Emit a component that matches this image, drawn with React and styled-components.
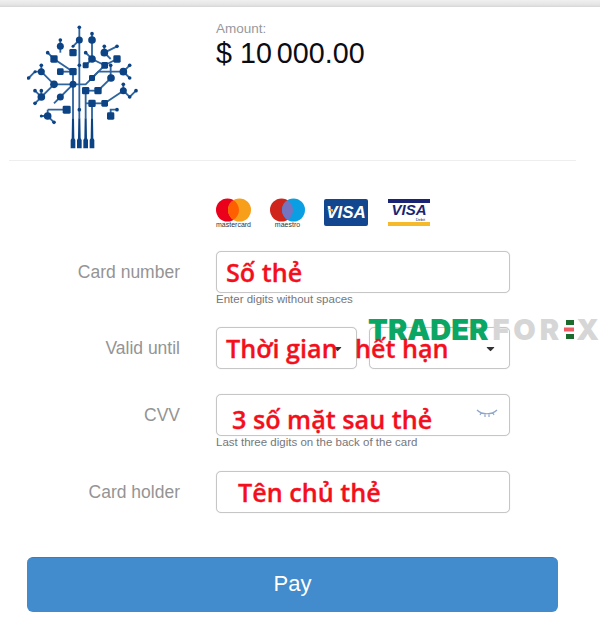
import styled, { createGlobalStyle } from "styled-components";
import { FaCaretDown } from "react-icons/fa";

const GlobalStyle = createGlobalStyle`
  html, body {
    margin: 0;
    padding: 0;
    background: #fff;
    font-family: "Liberation Sans", Arial, sans-serif;
  }
`;

const Page = styled.div`
  position: relative;
  width: 600px;
  height: 623px;
  overflow: hidden;
`;

const TopBar = styled.div`
  height: 7px;
  background: linear-gradient(#f0f0f0, #e4e4e4 70%, #d6d6d6);
`;

const Header = styled.header`
  display: flex;
  height: 153px;
  margin: 0 24px 0 9px;
  border-bottom: 1px solid #eeeeee;
  box-sizing: content-box;
`;

const LogoBox = styled.div`
  width: 207px;
  padding: 18px 0 0 18px;
  box-sizing: border-box;
`;

const AmountBox = styled.div`
  padding-top: 14px;
`;

const AmountLabel = styled.div`
  font-size: 13.5px;
  line-height: 16px;
  color: #98989c;
`;

const AmountValue = styled.div`
  font-size: 28.7px;
  line-height: 32px;
  color: #0c0c14;
`;

const ThousandsGroup = styled.span`
  margin-left: 5px;
`;

const Brands = styled.div`
  display: flex;
  align-items: flex-start;
  gap: 19px;
  height: 30px;
  margin: 37px 0 23px 216px;
`;

const BrandMark = styled.div`
  display: flex;
  flex-direction: column;
  align-items: center;
  width: 35px;
`;

const BrandCaption = styled.span`
  font-size: 7px;
  line-height: 6px;
  white-space: nowrap;
  color: #333;
`;

const VisaBlue = styled.div`
  position: relative;
  display: flex;
  align-items: center;
  justify-content: center;
  width: 44px;
  height: 27px;
  margin-top: 1px;
  border-radius: 2px;
  background: #12468f;
  color: #fff;
  font-size: 17px;
  font-weight: 700;
  font-style: italic;

  &::before {
    content: "";
    position: absolute;
    left: 3px;
    top: 10px;
    border-top: 3px solid #f0a92c;
    border-left: 6px solid transparent;
  }
`;

const VisaDebit = styled.div`
  position: relative;
  display: flex;
  justify-content: center;
  width: 42px;
  height: 19px;
  margin: 1px 0 0 1px;
  border-top: 4px solid #1a2474;
  border-bottom: 4px solid #f5b92a;
  color: #1a2474;
  font-size: 15px;
  line-height: 14px;
  font-weight: 700;
  font-style: italic;
`;

const DebitCaption = styled.span`
  position: absolute;
  right: 5px;
  bottom: 0;
  font-size: 4px;
  line-height: 4px;
  font-style: normal;
  font-weight: 400;
`;

const Row = styled.div`
  display: grid;
  grid-template-columns: 180px 294px;
  column-gap: 36px;
  margin-bottom: ${(p) => p.$gap}px;
`;

const Label = styled.div`
  height: 42px;
  font-size: 17.5px;
  line-height: 42px;
  text-align: right;
  color: #949494;
`;

const Fields = styled.div`
  position: relative;
  display: flex;
  gap: 12px;
`;

const Field = styled.div`
  position: relative;
  flex: 1;
  display: flex;
  align-items: center;
  height: 42px;
  box-sizing: border-box;
  padding-left: ${(p) => p.$indent}px;
  border: 1px solid #c6c6c6;
  border-radius: 5px;
  background: #fff;
  box-shadow: 0 0 1px #cfcfcf;
`;

const Marker = styled.span`
  font-family: "Open Sans", "Noto Sans", sans-serif;
  font-size: 25.2px;
  font-weight: 600;
  line-height: 30px;
  white-space: nowrap;
  color: #f40f1c;
  -webkit-text-stroke: 0.3px #f40f1c;
  padding-top: ${(p) => p.$drop || 0}px;
`;

const SpanMarker = styled(Marker)`
  position: absolute;
  left: 10px;
  top: 6px;
  z-index: 2;
`;

const Hint = styled.div`
  font-size: 11.5px;
  line-height: 13px;
  color: #76767a;
`;

const Caret = styled(FaCaretDown)`
  position: absolute;
  right: 12px;
  top: 14px;
  width: 13px;
  height: 13px;
  color: #333;
`;

const EyeIcon = styled.svg`
  position: absolute;
  right: 11px;
  top: 13px;
`;

const PayButton = styled.button`
  display: block;
  width: 531px;
  height: 55px;
  margin: 44px 0 0 27px;
  padding: 0 0 3px;
  border: 0;
  border-top: 1px solid #3a7cbd;
  border-radius: 6px;
  background: #428bcc;
  color: #fff;
  font-family: inherit;
  font-size: 22px;
`;

const Watermark = styled.div`
  position: absolute;
  left: 368px;
  top: 315px;
  z-index: 1;
  display: flex;
  align-items: center;
  font-family: Inter, "Open Sans", sans-serif;
  font-size: 29px;
  line-height: 30px;
  font-weight: 900;
`;

const Trader = styled.span`
  color: #0ba564;
`;

const Forex = styled.span`
  color: #d6d6d6;
  letter-spacing: ${(p) => p.$spacing}px;
  margin-left: ${(p) => p.$inset}px;
`;

const CandleIcon = styled.svg`
  margin: 0 1px 0 0;
`;

const nodes = [
  [237, 120, 9], [237, 82, 4], [275, 120, 10], [275, 101, 4], [218, 158, 10, 1], [180, 139, 9], [180, 120, 4],
  [161, 177, 10, 1], [142, 158, 4], [218, 215, 10, 1], [180, 215, 9, 1], [123, 215, 9], [123, 196, 4], [104, 215, 3],
  [85, 234, 4], [161, 253, 10], [218, 253, 9], [123, 291, 10], [104, 272, 4], [123, 272, 4], [104, 310, 4],
  [180, 291, 9], [199, 329, 11, 1], [142, 348, 10], [123, 348, 3], [161, 367, 4], [256, 272, 10, 1], [293, 272, 10, 1],
  [332, 234, 10], [275, 234, 8, 1], [313, 196, 9, 1], [275, 177, 10], [256, 196, 8, 1], [256, 158, 4], [312, 158, 10],
  [312, 139, 4], [350, 139, 4], [350, 177, 10, 1], [369, 215, 10], [388, 196, 4], [388, 234, 4], [331, 196, 4],
  [369, 272, 9], [369, 253, 4], [388, 291, 4], [407, 272, 4], [275, 310, 10, 1], [313, 310, 9, 1], [350, 329, 4],
  [331, 348, 10, 1], [237, 329, 4], [237, 196, 4], [218, 139, 3],
];

const links = [
  "M237 82V355", "M218 215V355", "M256 272V355", "M275 310V355", "M237 120L218 139", "M275 101V177",
  "M180 120V158", "M142 158L161 177L218 215", "M180 215H218", "M123 196V215L161 253H256L313 196", "M85 234L104 215H123",
  "M218 253L180 291L161 310", "M123 272V291L104 272M123 291L104 310", "M161 253L123 291",
  "M142 329H199M142 329V348M123 348H142L161 367", "M256 158L275 177L313 196L350 177", "M256 196L275 177",
  "M312 139V158L350 139M312 158L331 177", "M275 234L294 215H369L388 196M369 215L388 234M331 196V234",
  "M293 272L332 234", "M256 272H293", "M256 310H313", "M313 310L369 272V253M369 272L388 291L407 272",
  "M331 348V329H350",
];

function TreeLogo() {
  return (
    <svg width="114" height="130" viewBox="80 75 342 390" fill="#0c4384">
      <g stroke="#2f659f" strokeWidth="5.5" fill="none">
        {links.map((d) => (
          <path key={d} d={d} />
        ))}
      </g>
      {nodes.map(([x, y, r, square]) =>
        square ? (
          <rect key={`${x}-${y}`} x={x - r - 1} y={y - r - 1} width={r * 2 + 2} height={r * 2 + 2} rx="4" />
        ) : (
          <circle key={`${x}-${y}`} cx={x} cy={y} r={r + 1.5} />
        )
      )}
      {[218, 237, 256, 275].map((x) => (
        <path key={x} d={`M${x - 3} 355H${x + 3}L${x + 4} 415L${x + 7} 420V445H${x - 7}V420L${x - 4} 415Z`} />
      ))}
    </svg>
  );
}

function Circles({ left, right, mid }) {
  return (
    <svg width="35" height="24" viewBox="0 0 35 24">
      <circle cx="11.5" cy="12" r="11.5" fill={left} />
      <circle cx="23.5" cy="12" r="11.5" fill={right} />
      <path d="M17.5 2.2a11.5 11.5 0 0 1 0 19.6a11.5 11.5 0 0 1 0-19.6Z" fill={mid} />
    </svg>
  );
}

function App() {
  return (
    <Page>
      <GlobalStyle />
      <TopBar />
      <Header>
        <LogoBox>
          <TreeLogo />
        </LogoBox>
        <AmountBox>
          <AmountLabel>Amount:</AmountLabel>
          <AmountValue>
            $ 10<ThousandsGroup>000.00</ThousandsGroup>
          </AmountValue>
        </AmountBox>
      </Header>

      <Brands>
        <BrandMark>
          <Circles left="#ea001b" right="#f79e1b" mid="#ff5f00" />
          <BrandCaption>mastercard</BrandCaption>
        </BrandMark>
        <BrandMark>
          <Circles left="#d0251c" right="#0a9fe3" mid="#7673c0" />
          <BrandCaption>maestro</BrandCaption>
        </BrandMark>
        <VisaBlue>VISA</VisaBlue>
        <VisaDebit>
          VISA
          <DebitCaption>Debit</DebitCaption>
        </VisaDebit>
      </Brands>

      <Row $gap={21}>
        <Label>Card number</Label>
        <div>
          <Field $indent={9}>
            <Marker>Số thẻ</Marker>
          </Field>
          <Hint>Enter digits without spaces</Hint>
        </div>
      </Row>

      <Row $gap={25}>
        <Label>Valid until</Label>
        <Fields>
          <Field>
            <Caret />
          </Field>
          <Field>
            <Caret />
          </Field>
          <SpanMarker>Thời gian&nbsp;&thinsp; hết hạn</SpanMarker>
        </Fields>
      </Row>

      <Row $gap={22}>
        <Label>CVV</Label>
        <div>
          <Field $indent={15}>
            <Marker $drop={8}>3 số mặt sau thẻ</Marker>
            <EyeIcon width="22" height="12" viewBox="0 0 22 12" fill="none" stroke="#8ea6cc" strokeWidth="1.2">
              <path d="M1 2C6 7 16 7 21 2M5 5L4 7M9 6.5V9M13 6.5V9M17 5L18 7" />
            </EyeIcon>
          </Field>
          <Hint>Last three digits on the back of the card</Hint>
        </div>
      </Row>

      <Row $gap={0}>
        <Label>Card holder</Label>
        <Field $indent={21}>
          <Marker>Tên chủ thẻ</Marker>
        </Field>
      </Row>

      <PayButton>Pay</PayButton>

      <Watermark>
        <Trader>TRADER</Trader>
        <Forex $spacing={4} $inset={4}>
          FOR
        </Forex>
        <CandleIcon width="12" height="20" viewBox="0 0 12 20">
          <rect x="3" y="0" width="8" height="5" fill="#1c6b2c" />
          <rect x="1" y="7.5" width="10" height="4" fill="#ef5a63" />
          <rect x="3" y="14" width="8" height="5" fill="#1c6b2c" />
        </CandleIcon>
        <Forex $spacing={0} $inset={0}>
          X
        </Forex>
      </Watermark>
    </Page>
  );
}

export default App;
